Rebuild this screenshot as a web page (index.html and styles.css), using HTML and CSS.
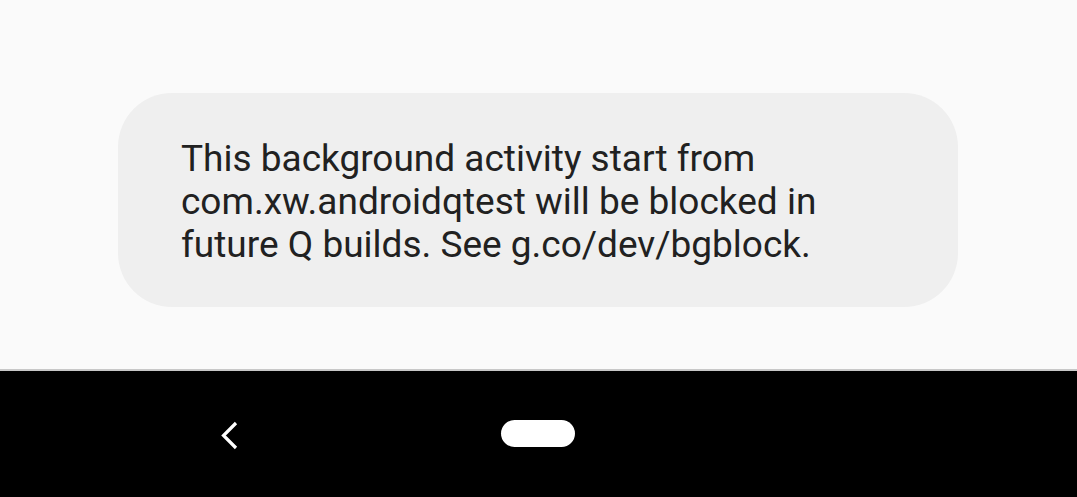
FILE: index.html
```html
<!DOCTYPE html>
<html>
<head>
<meta charset="utf-8">
<link rel="stylesheet" href="styles.css">
</head>
<body>
<main class="screen">
  <div class="toast">
    <p class="toast-text">This background activity start from<br>com.xw.androidqtest will be blocked in<br>future Q builds. See g.co/dev/bgblock.</p>
  </div>
</main>
<nav class="navbar">
  <svg class="back" width="20" height="32" viewBox="0 0 20 32"><path d="M17 4 L4.5 16.5 L17 29" fill="none" stroke="#fff" stroke-width="3.2"/></svg>
  <div class="home"></div>
</nav>
</body>
</html>
```
FILE: styles.css
```css
html, body {
  margin: 0;
  padding: 0;
  width: 1077px;
  height: 497px;
  overflow: hidden;
  background: #fafafa;
  font-family: Roboto, "Noto Sans", sans-serif;
}
.screen {
  height: 371px;
  padding-top: 93px;
  box-sizing: border-box;
  border-bottom: 2px solid #c8c8c8;
}
.toast {
  margin-left: 118px;
  width: 840px;
  height: 214px;
  box-sizing: border-box;
  border-radius: 54px;
  background: #efefef;
  padding: 44px 0 0 63px;
}
.toast-text {
  margin: 0;
  font-size: 37px;
  line-height: 43px;
  color: #212121;
}
.navbar {
  height: 126px;
  background: #000;
  position: relative;
}
.back {
  position: absolute;
  left: 219px;
  top: 48px;
}
.home {
  position: absolute;
  left: 501px;
  top: 49px;
  width: 74px;
  height: 27px;
  border-radius: 14px;
  background: #fff;
}
```
